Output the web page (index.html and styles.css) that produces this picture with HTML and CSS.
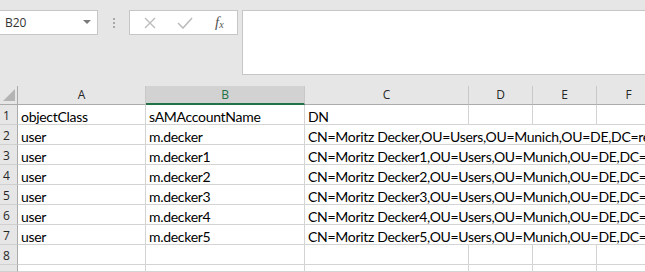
FILE: index.html
```html
<!DOCTYPE html>
<html lang="en">

<head>
  <meta charset="UTF-8">
  <meta name="viewport" content="width=device-width, initial-scale=1.0">
  <title>Users export</title>
  <link rel="stylesheet" href="styles.css">
</head>

<body>
  <div class="formula-bar">
    <div class="name-box">
      <span>B20</span>
      <span class="caret"></span>
    </div>
    <div class="grip">
      <span></span><span></span><span></span>
    </div>
    <div class="fx-buttons">
      <svg class="icon" width="12" height="12" viewBox="0 0 12 12">
        <path d="M1 1 L11 11 M11 1 L1 11" stroke="#bcbcbc" stroke-width="1.4" fill="none" />
      </svg>
      <svg class="icon" width="16" height="12" viewBox="0 0 16 12">
        <path d="M1 6 L6 11 L15 1" stroke="#bcbcbc" stroke-width="1.6" fill="none" />
      </svg>
      <span class="fx">f<sub>x</sub></span>
    </div>
    <div class="formula-input"></div>
  </div>

  <div class="sheet">
    <div class="corner"><span class="tri"></span></div>
    <div class="col-head">A</div>
    <div class="col-head active">B</div>
    <div class="col-head">C</div>
    <div class="col-head">D</div>
    <div class="col-head">E</div>
    <div class="col-head">F</div>

    <div class="row-head">1</div>
    <div class="cell">objectClass</div>
    <div class="cell">sAMAccountName</div>
    <div class="cell">DN</div>
    <div class="cell"></div>
    <div class="cell"></div>
    <div class="cell"></div>

    <div class="row-head">2</div>
    <div class="cell">user</div>
    <div class="cell">m.decker</div>
    <div class="cell spill">CN=Moritz Decker,OU=Users,OU=Munich,OU=DE,DC=re</div>

    <div class="row-head">3</div>
    <div class="cell">user</div>
    <div class="cell">m.decker1</div>
    <div class="cell spill">CN=Moritz Decker1,OU=Users,OU=Munich,OU=DE,DC=re</div>

    <div class="row-head">4</div>
    <div class="cell">user</div>
    <div class="cell">m.decker2</div>
    <div class="cell spill">CN=Moritz Decker2,OU=Users,OU=Munich,OU=DE,DC=re</div>

    <div class="row-head">5</div>
    <div class="cell">user</div>
    <div class="cell">m.decker3</div>
    <div class="cell spill">CN=Moritz Decker3,OU=Users,OU=Munich,OU=DE,DC=re</div>

    <div class="row-head">6</div>
    <div class="cell">user</div>
    <div class="cell">m.decker4</div>
    <div class="cell spill">CN=Moritz Decker4,OU=Users,OU=Munich,OU=DE,DC=re</div>

    <div class="row-head">7</div>
    <div class="cell">user</div>
    <div class="cell">m.decker5</div>
    <div class="cell spill">CN=Moritz Decker5,OU=Users,OU=Munich,OU=DE,DC=re</div>

    <div class="row-head">8</div>
    <div class="cell"></div>
    <div class="cell"></div>
    <div class="cell"></div>
    <div class="cell"></div>
    <div class="cell"></div>
    <div class="cell"></div>

    <div class="row-head"></div>
    <div class="cell"></div>
    <div class="cell"></div>
    <div class="cell"></div>
    <div class="cell"></div>
    <div class="cell"></div>
    <div class="cell"></div>
  </div>
</body>

</html>
```

FILE: styles.css
```css
html,
body {
  margin: 0;
  padding: 0;
  width: 645px;
  height: 272px;
  overflow: hidden;
  background-color: #e6e6e6;
}

.formula-bar {
  display: flex;
  align-items: flex-start;
  height: 76px;
  padding-top: 10px;
  box-sizing: border-box;
  font-family: "Open Sans", "Noto Sans", sans-serif;
}

.name-box {
  width: 98px;
  height: 25px;
  box-sizing: border-box;
  background: #fff;
  border: 1px solid #c6c6c6;
  border-left: none;
  display: flex;
  align-items: center;
  justify-content: space-between;
  padding: 0 6px 0 5px;
  font-size: 12px;
  color: #333;
}

.caret {
  width: 0;
  height: 0;
  border-left: 4px solid transparent;
  border-right: 4px solid transparent;
  border-top: 4px solid #7a7a7a;
  margin-top: -2px;
}

.grip {
  width: 31px;
  height: 25px;
  display: flex;
  flex-direction: column;
  align-items: center;
  justify-content: center;
  gap: 2px;
}

.grip span {
  width: 2px;
  height: 2px;
  background: #a8a8a8;
}

.fx-buttons {
  width: 109px;
  height: 25px;
  box-sizing: border-box;
  background: #fff;
  border: 1px solid #c6c6c6;
  display: flex;
  align-items: center;
  padding-left: 14px;
  gap: 21px;
}

.fx {
  font-family: "Liberation Serif", serif;
  font-style: italic;
  font-size: 15px;
  color: #555;
  margin-left: 1px;
}

.fx sub {
  font-size: 10px;
  vertical-align: -1px;
}

.formula-input {
  flex: 1;
  margin-left: 4px;
  height: 65px;
  box-sizing: border-box;
  background: #fff;
  border: 1px solid #c6c6c6;
  border-right: none;
}

.sheet {
  margin-top: 10px;
  display: grid;
  grid-template-columns: 18px 128px 159px 164px 64px 64px 64px;
  grid-template-rows: 19px repeat(8, 20px) 7px;
  background: #fff;
  font-family: "Lato", "Carlito", sans-serif;
  font-size: 14px;
  letter-spacing: -0.3px;
  color: #000;
}

.corner {
  position: relative;
  background: #e6e6e6;
  border-right: 1px solid #ababab;
  border-bottom: 1px solid #ababab;
}

.tri {
  position: absolute;
  right: 2px;
  bottom: 3px;
  width: 0;
  height: 0;
  border-left: 12px solid transparent;
  border-bottom: 12px solid #b4b4b4;
}

.col-head {
  background: #e6e6e6;
  border-right: 1px solid #c8c8c8;
  border-bottom: 1px solid #ababab;
  font-family: "Open Sans", "Noto Sans", sans-serif;
  font-size: 12px;
  color: #262626;
  text-align: center;
  line-height: 18px;
}

.col-head.active {
  background: #d2d2d2;
  color: #217346;
  border-bottom: 2px solid #217346;
  line-height: 17px;
}

.row-head {
  background: #e6e6e6;
  border-right: 1px solid #ababab;
  border-bottom: 1px solid #d0d0d0;
  font-family: "Open Sans", "Noto Sans", sans-serif;
  font-size: 12px;
  color: #262626;
  padding-left: 3px;
  line-height: 21px;
}

.cell {
  border-right: 1px solid #d4d4d4;
  border-bottom: 1px solid #d4d4d4;
  padding-left: 3px;
  line-height: 24px;
  white-space: nowrap;
  overflow: hidden;
}

.cell.spill {
  grid-column: span 4;
  border-right: none;
}
```
